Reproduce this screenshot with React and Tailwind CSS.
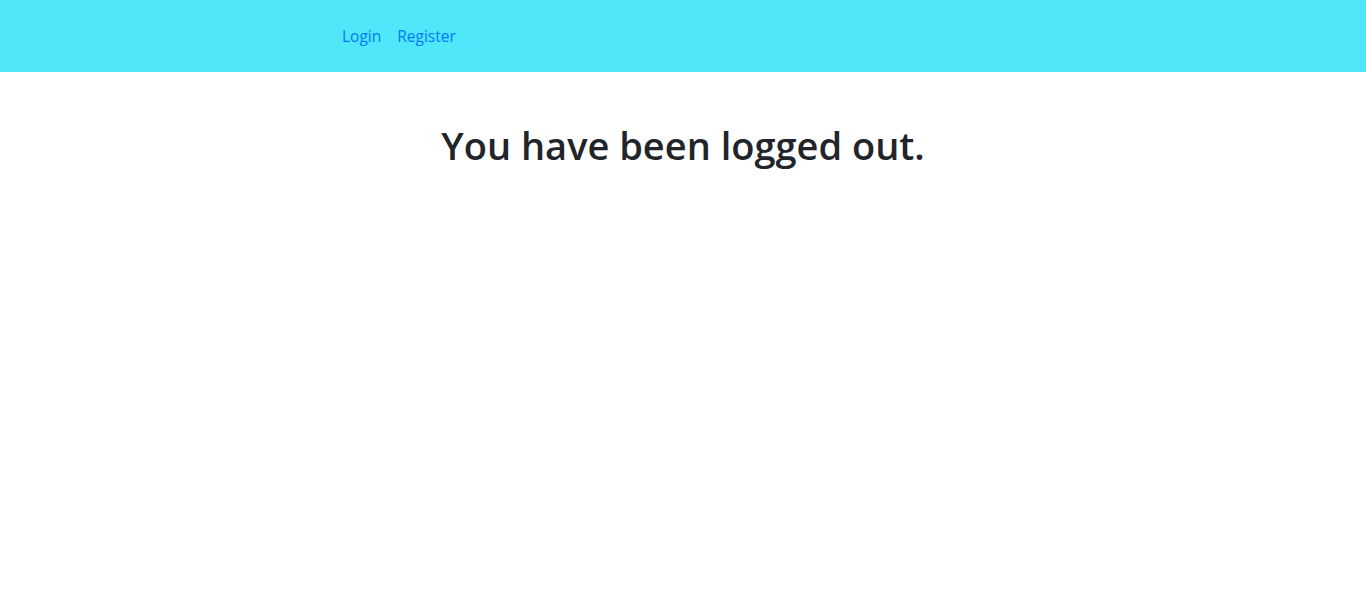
export default function App() {
  return (
    <div className="min-h-[612px] bg-white" style={{ fontFamily: '"Open Sans", "Noto Sans", sans-serif' }}>
      <nav className="h-[72px] bg-[#50e7fb] flex items-center pl-[334px] pt-[2px]">
        <a href="#" className="px-2 text-[15.5px] text-[#007bff]">Login</a>
        <a href="#" className="px-2 text-[15.5px] text-[#007bff]">Register</a>
      </nav>
      <div className="pt-[49px] text-center">
        <h1 className="text-[38px] leading-[48px] font-semibold text-[#212529]">You have been logged out.</h1>
      </div>
    </div>
  );
}
